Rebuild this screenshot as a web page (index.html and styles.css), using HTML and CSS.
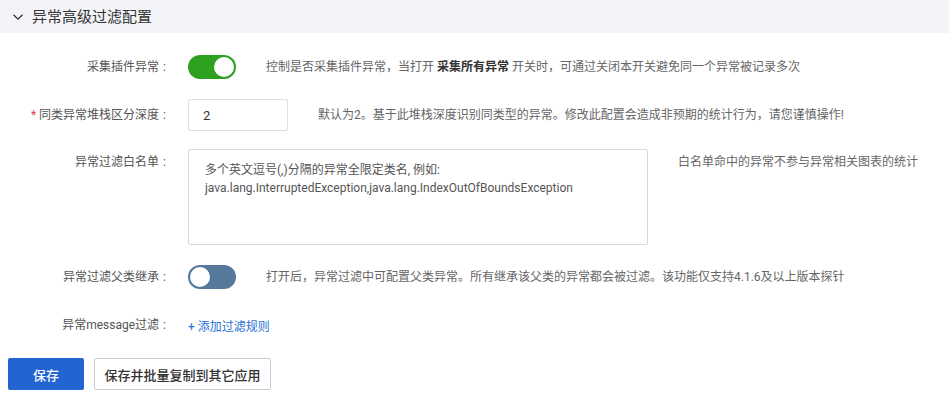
FILE: index.html
```html
<!DOCTYPE html>
<html lang="zh-CN">

<head>
    <meta charset="UTF-8">
    <meta name="viewport" content="width=device-width, initial-scale=1.0">
    <title>异常高级过滤配置</title>
    <link rel="stylesheet" href="styles.css">
</head>

<body>

    <div class="panel-header">
        <svg class="chevron" width="12" height="12" viewBox="0 0 12 12">
            <path d="M1.5 3.8 L6 8.2 L10.5 3.8" fill="none" stroke="#333" stroke-width="1.3" />
        </svg>
        <h2>异常高级过滤配置</h2>
    </div>

    <form class="config-form">
        <div class="form-row row-plugin">
            <label class="form-label">采集插件异常</label>
            <span class="switch on"><span class="knob"></span></span>
            <p class="form-desc">控制是否采集插件异常，当打开 <b>采集所有异常</b> 开关时，可通过关闭本开关避免同一个异常被记录多次</p>
        </div>

        <div class="form-row row-depth">
            <label class="form-label"><span class="required">*</span> 同类异常堆栈区分深度</label>
            <input class="text-input" type="text" value="2">
            <p class="form-desc">默认为2。基于此堆栈深度识别同类型的异常。修改此配置会造成非预期的统计行为，请您谨慎操作!</p>
        </div>

        <div class="form-row row-white">
            <label class="form-label">异常过滤白名单</label>
            <textarea class="text-area" placeholder="多个英文逗号(,)分隔的异常全限定类名, 例如:&#10;java.lang.InterruptedException,java.lang.IndexOutOfBoundsException"></textarea>
            <p class="form-desc">白名单命中的异常不参与异常相关图表的统计</p>
        </div>

        <div class="form-row row-parent">
            <label class="form-label">异常过滤父类继承</label>
            <span class="switch off"><span class="knob"></span></span>
            <p class="form-desc">打开后，异常过滤中可配置父类异常。所有继承该父类的异常都会被过滤。该功能仅支持4.1.6及以上版本探针</p>
        </div>

        <div class="form-row row-message">
            <label class="form-label">异常message过滤</label>
            <a class="add-link" href="#">+ 添加过滤规则</a>
        </div>

        <div class="form-actions">
            <button type="submit" class="btn btn-primary">保存</button>
            <button type="button" class="btn btn-default">保存并批量复制到其它应用</button>
        </div>
    </form>

</body>

</html>
```

FILE: styles.css
```css
* {
    padding: 0;
    margin: 0;
    box-sizing: border-box;
}

body {
    font-family: Roboto, "Noto Sans CJK SC", sans-serif;
    font-size: 12px;
    color: #555;
    background-color: #fff;
}

.panel-header {
    display: flex;
    align-items: center;
    height: 33px;
    padding-left: 12px;
    background-color: #f2f4f7;
}

.chevron {
    margin-right: 8px;
    margin-top: 1px;
}

.panel-header h2 {
    font-size: 15px;
    font-weight: normal;
    color: #333;
    line-height: 20px;
}

.config-form {
    padding-top: 22px;
}

.form-row {
    display: flex;
    align-items: center;
}

.form-label {
    width: 166px;
    text-align: right;
    color: #555;
    line-height: 18px;
    margin-right: 22px;
    flex-shrink: 0;
}

.form-label::after {
    content: ":";
    margin-left: 4px;
}

.required {
    color: #e4393c;
}

.form-desc {
    margin-left: 30px;
    color: #666;
    line-height: 18px;
}

.form-desc b {
    color: #333;
}

.switch {
    display: inline-block;
    position: relative;
    width: 48px;
    height: 24px;
    border-radius: 12px;
    flex-shrink: 0;
}

.switch.on {
    background-color: #2ea121;
}

.switch.off {
    background-color: #55789b;
}

.switch .knob {
    position: absolute;
    top: 2px;
    width: 20px;
    height: 20px;
    border-radius: 50%;
    background-color: #fff;
}

.switch.on .knob {
    right: 2px;
}

.switch.off .knob {
    left: 2px;
}

.row-depth {
    margin-top: 20px;
}

.text-input {
    width: 100px;
    height: 32px;
    border: 1px solid #dcdfe6;
    border-radius: 2px;
    padding-left: 14px;
    font-family: Roboto, "Noto Sans CJK SC", sans-serif;
    font-size: 13px;
    color: #333;
    outline: none;
}

.row-white {
    margin-top: 18px;
    align-items: flex-start;
}

.row-white .form-label,
.row-white .form-desc {
    padding-top: 4px;
}

.text-area {
    width: 460px;
    height: 96px;
    border: 1px solid #d7d9de;
    border-radius: 2px;
    padding: 11px 16px;
    font-family: Roboto, "Noto Sans CJK SC", sans-serif;
    font-size: 12px;
    line-height: 18px;
    resize: none;
    outline: none;
}

.text-area::placeholder {
    color: #555;
}

.row-parent {
    margin-top: 20px;
}

.row-message {
    margin-top: 24px;
    height: 24px;
}

.add-link {
    color: #2a6fd6;
    text-decoration: none;
}

.form-actions {
    display: flex;
    gap: 10px;
    margin-top: 21px;
    padding-left: 8px;
}

.btn {
    height: 32px;
    border-radius: 2px;
    font-family: Roboto, "Noto Sans CJK SC", sans-serif;
    font-size: 13px;
    font-weight: 500;
    cursor: pointer;
}

.btn-primary {
    width: 76px;
    border: none;
    background-color: #2264d1;
    color: #fff;
}

.btn-default {
    width: 177px;
    border: 1px solid #c9ccd2;
    background-color: #fff;
    color: #333;
}
```
